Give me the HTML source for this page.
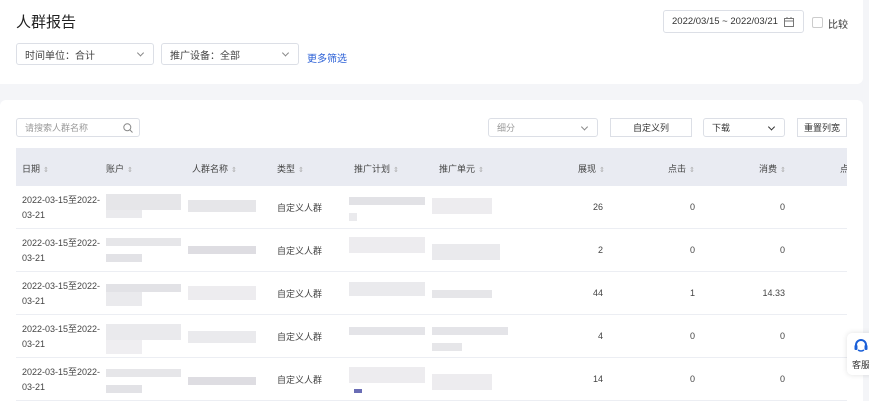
<!DOCTYPE html>
<html><head><meta charset="utf-8"><style>
*{box-sizing:border-box;margin:0;padding:0}
body{width:869px;height:401px;background:#f4f5f8;font-family:"Liberation Sans","Noto Sans CJK SC",sans-serif;color:#333;position:relative;overflow:hidden;font-size:9px}
.card1{position:absolute;left:0;top:0;width:863px;height:84px;background:#fff;border-radius:0 0 6px 0}
.card2{position:absolute;left:0;top:100px;width:863px;height:301px;background:#fff;border-radius:6px 6px 0 0}
.a{position:absolute;white-space:nowrap}
.sel{position:absolute;border:1px solid #dcdfe6;border-radius:3px;background:#fff;font-size:10px;color:#444;padding-left:8px;display:flex;align-items:center;white-space:nowrap}
.chev{position:absolute;right:10px;top:50%;width:5px;height:5px;border-right:1px solid #888;border-bottom:1px solid #888;transform:translateY(-70%) rotate(45deg)}
.btn{position:absolute;border:1px solid #dcdfe6;background:#fff;font-size:9px;color:#333;display:flex;align-items:center;justify-content:center;top:118px;height:19px}
.th{position:absolute;top:148px;left:16px;width:831px;height:38px;background:#e9ebf2}
.h{position:absolute;top:162px;font-size:9px;color:#444;white-space:nowrap}
.h:after{content:"⇕";font-size:7px;color:#aaa;margin-left:3px}
.row{position:absolute;left:16px;width:831px;height:43px;border-bottom:1px solid #eceef3}
.d{position:absolute;font-size:9px;color:#444;line-height:15px;white-space:nowrap}
.b{position:absolute;background:#d6d5db}
.n{position:absolute;font-size:9px;color:#444;text-align:right}
</style></head><body>
<div class="card1"></div>
<div class="card2"></div>
<div class="a" style="left:16px;top:11px;font-size:15px;color:#222">人群报告</div>
<div class="sel" style="left:16px;top:43px;width:138px;height:22px">时间单位：合计<span class="chev"></span></div>
<div class="sel" style="left:161px;top:43px;width:138px;height:22px">推广设备：全部<span class="chev"></span></div>
<div class="a" style="left:307px;top:50px;font-size:10px;color:#2a5fd6">更多筛选</div>
<div class="sel" style="left:663px;top:10px;width:141px;height:23px;font-size:9.5px;color:#333">2022/03/15 ~ 2022/03/21
<svg style="position:absolute;right:9px;top:6px" width="10" height="10" viewBox="0 0 10 10"><rect x="0.5" y="1.5" width="9" height="8" fill="none" stroke="#777"/><line x1="0.5" y1="4" x2="9.5" y2="4" stroke="#777"/><line x1="3" y1="0" x2="3" y2="2" stroke="#777"/><line x1="7" y1="0" x2="7" y2="2" stroke="#777"/></svg></div>
<div class="a" style="left:812px;top:17px;width:11px;height:11px;border:1px solid #ccc;border-radius:2px"></div>
<div class="a" style="left:828px;top:16px;font-size:10px">比较</div>

<div class="sel" style="left:16px;top:118px;width:124px;height:19px;font-size:9px;color:#999">请搜索人群名称
<svg style="position:absolute;right:6px;top:4px" width="10" height="10" viewBox="0 0 10 10"><circle cx="4.3" cy="4.3" r="3.5" fill="none" stroke="#888"/><line x1="7" y1="7" x2="9.5" y2="9.5" stroke="#888"/></svg></div>
<div class="sel" style="left:488px;top:118px;width:110px;height:19px;font-size:9px;color:#999">细分<span class="chev"></span></div>
<div class="btn" style="left:610px;width:82px">自定义列</div>
<div class="sel" style="left:703px;top:118px;width:82px;height:19px;font-size:9px;color:#333">下载<span class="chev" style="border-color:#333"></span></div>
<div class="btn" style="left:797px;width:50px">重置列宽</div>

<div class="th"></div>
<div class="h" style="left:22px">日期</div>
<div class="h" style="left:106px">账户</div>
<div class="h" style="left:192px">人群名称</div>
<div class="h" style="left:277px">类型</div>
<div class="h" style="left:354px">推广计划</div>
<div class="h" style="left:439px">推广单元</div>
<div class="h" style="left:578px">展现</div>
<div class="h" style="left:668px">点击</div>
<div class="h" style="left:759px">消费</div>
<div class="a" style="left:840px;top:162px;font-size:9px;color:#444;width:7px;overflow:hidden">点</div>

<div class="row" style="top:186px"></div>
<div class="row" style="top:229px"></div>
<div class="row" style="top:272px"></div>
<div class="row" style="top:315px"></div>
<div class="row" style="top:358px"></div>

<div class="d" style="left:22px;top:193px">2022-03-15至2022-<br>03-21</div>
<div class="d" style="left:22px;top:236px">2022-03-15至2022-<br>03-21</div>
<div class="d" style="left:22px;top:279px">2022-03-15至2022-<br>03-21</div>
<div class="d" style="left:22px;top:322px">2022-03-15至2022-<br>03-21</div>
<div class="d" style="left:22px;top:365px">2022-03-15至2022-<br>03-21</div>

<div class="d" style="left:277px;top:201px">自定义人群</div>
<div class="d" style="left:277px;top:244px">自定义人群</div>
<div class="d" style="left:277px;top:287px">自定义人群</div>
<div class="d" style="left:277px;top:330px">自定义人群</div>
<div class="d" style="left:277px;top:373px">自定义人群</div>

<div class="b" style="left:106px;top:194px;width:75px;height:16px;opacity:.6"></div><div class="b" style="left:106px;top:210px;width:36px;height:8px;opacity:.5"></div><div class="b" style="left:188px;top:200px;width:68px;height:12px;opacity:.6"></div><div class="b" style="left:349px;top:197px;width:76px;height:8px;opacity:.7"></div><div class="b" style="left:349px;top:213px;width:8px;height:8px;opacity:.5"></div><div class="b" style="left:432px;top:198px;width:60px;height:16px;opacity:.45"></div>
<div class="b" style="left:106px;top:238px;width:75px;height:8px;opacity:.6"></div><div class="b" style="left:106px;top:254px;width:36px;height:8px;opacity:.7"></div><div class="b" style="left:188px;top:246px;width:68px;height:8px;opacity:.8"></div><div class="b" style="left:349px;top:237px;width:76px;height:16px;opacity:.45"></div><div class="b" style="left:432px;top:244px;width:68px;height:16px;opacity:.5"></div>
<div class="b" style="left:106px;top:284px;width:75px;height:8px;opacity:.7"></div><div class="b" style="left:106px;top:292px;width:36px;height:14px;opacity:.5"></div><div class="b" style="left:188px;top:286px;width:68px;height:14px;opacity:.45"></div><div class="b" style="left:349px;top:282px;width:76px;height:14px;opacity:.5"></div><div class="b" style="left:432px;top:290px;width:60px;height:8px;opacity:.6"></div>
<div class="b" style="left:106px;top:324px;width:75px;height:16px;opacity:.5"></div><div class="b" style="left:106px;top:340px;width:36px;height:14px;opacity:.4"></div><div class="b" style="left:188px;top:331px;width:68px;height:12px;opacity:.5"></div><div class="b" style="left:349px;top:327px;width:76px;height:8px;opacity:.65"></div><div class="b" style="left:432px;top:327px;width:76px;height:8px;opacity:.65"></div><div class="b" style="left:432px;top:343px;width:30px;height:8px;opacity:.6"></div>
<div class="b" style="left:106px;top:369px;width:75px;height:8px;opacity:.6"></div><div class="b" style="left:106px;top:385px;width:36px;height:8px;opacity:.7"></div><div class="b" style="left:188px;top:377px;width:68px;height:8px;opacity:.8"></div><div class="b" style="left:349px;top:367px;width:76px;height:16px;opacity:.45"></div><div class="b" style="left:354px;top:389px;width:8px;height:4px;background:#6a6db5"></div><div class="b" style="left:432px;top:374px;width:60px;height:16px;opacity:.45"></div>

<div class="n" style="left:560px;width:43px;top:202px">26</div>
<div class="n" style="left:560px;width:43px;top:245px">2</div>
<div class="n" style="left:560px;width:43px;top:288px">44</div>
<div class="n" style="left:560px;width:43px;top:331px">4</div>
<div class="n" style="left:560px;width:43px;top:374px">14</div>
<div class="n" style="left:650px;width:45px;top:202px">0</div>
<div class="n" style="left:650px;width:45px;top:245px">0</div>
<div class="n" style="left:650px;width:45px;top:288px">1</div>
<div class="n" style="left:650px;width:45px;top:331px">0</div>
<div class="n" style="left:650px;width:45px;top:374px">0</div>
<div class="n" style="left:740px;width:45px;top:202px">0</div>
<div class="n" style="left:740px;width:45px;top:245px">0</div>
<div class="n" style="left:740px;width:45px;top:288px">14.33</div>
<div class="n" style="left:740px;width:45px;top:331px">0</div>
<div class="n" style="left:740px;width:45px;top:374px">0</div>

<div class="a" style="left:847px;top:333px;width:30px;height:42px;background:#fff;border-radius:5px;box-shadow:0 0 6px rgba(0,0,0,.12)"></div>
<svg class="a" style="left:853px;top:338px" width="16" height="16" viewBox="0 0 16 16"><path d="M3 9V7a5 5 0 0 1 10 0v2" fill="none" stroke="#1a5fd8" stroke-width="2"/><rect x="1.5" y="7" width="3" height="5" rx="1" fill="#1a5fd8"/><rect x="11.5" y="7" width="3" height="5" rx="1" fill="#1a5fd8"/><path d="M5 12q3 2 6 0" fill="none" stroke="#1a5fd8" stroke-width="1.5"/></svg>
<div class="a" style="left:852px;top:358px;font-size:9px;color:#333">客服</div>
</body></html>
